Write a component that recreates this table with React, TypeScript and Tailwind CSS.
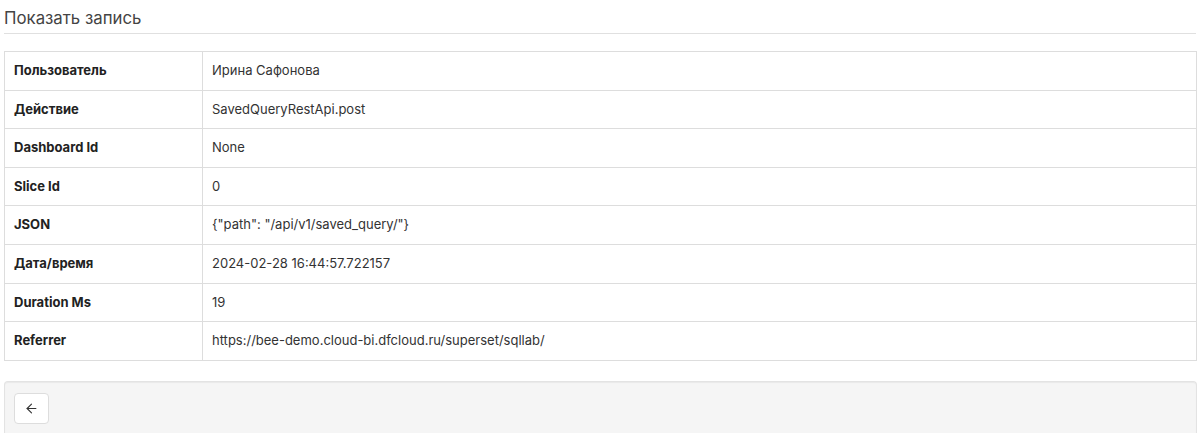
import { ArrowLeft } from 'lucide-react'

const rows = [
  { label: 'Пользователь', value: 'Ирина Сафонова' },
  { label: 'Действие', value: 'SavedQueryRestApi.post' },
  { label: 'Dashboard Id', value: 'None' },
  { label: 'Slice Id', value: '0' },
  { label: 'JSON', value: '{"path": "/api/v1/saved_query/"}' },
  { label: 'Дата/время', value: '2024-02-28 16:44:57.722157' },
  { label: 'Duration Ms', value: '19' },
  { label: 'Referrer', value: 'https://bee-demo.cloud-bi.dfcloud.ru/superset/sqllab/' },
]

export default function App() {
  return (
    <div className="min-h-[433px] bg-white px-[4px] font-['Inter',sans-serif] text-[#333]">
      <div className="border-b border-[#e0e0e0] pt-[9px] pb-[5px]">
        <h2 className="text-[16.8px] font-normal leading-[19px] text-[#444]">Показать запись</h2>
      </div>

      <table className="mt-[17px] w-[1193px] border-collapse border border-[#dddddd] text-[13px]">
        <tbody>
          {rows.map((row) => (
            <tr key={row.label} className="border-t border-[#dddddd]">
              <th className="w-[198px] border-r border-[#dddddd] px-[9px] py-[9px] text-left font-bold leading-[19.6px] text-[#222]">
                {row.label}
              </th>
              <td className="px-[9px] py-[9px] leading-[19.6px] text-[#333]">{row.value}</td>
            </tr>
          ))}
        </tbody>
      </table>

      <div className="mt-[20px] h-[60px] w-[1193px] rounded-t-[4px] border border-b-0 border-[#e3e3e3] bg-[#f5f5f5] px-[9px] pt-[11px] shadow-[inset_0_1px_1px_rgba(0,0,0,0.05)]">
        <button className="flex h-[31px] w-[35px] items-center justify-center rounded-[4px] border border-[#dddddd] bg-white text-[#333]">
          <ArrowLeft size={15} strokeWidth={1.8} />
        </button>
      </div>
    </div>
  )
}
